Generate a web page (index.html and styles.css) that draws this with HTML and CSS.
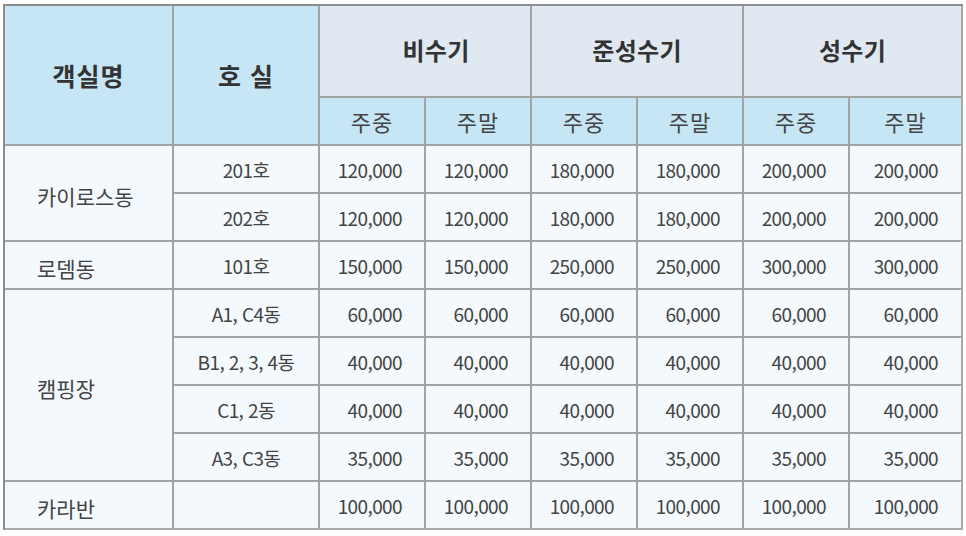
FILE: index.html
```html
<!DOCTYPE html>
<html lang="ko">
<head>
<meta charset="utf-8">
<title>객실 요금표</title>
<link rel="stylesheet" href="styles.css">
</head>
<body>
<table class="rates">
  <colgroup>
    <col class="c-name">
    <col class="c-room">
    <col class="c-val"><col class="c-val"><col class="c-val"><col class="c-val"><col class="c-val">
    <col class="c-last">
  </colgroup>
  <thead>
    <tr class="h1">
      <th rowspan="2" class="hb">객실명</th>
      <th rowspan="2" class="hb">호 실</th>
      <th colspan="2" class="hg hg-off">비수기</th>
      <th colspan="2" class="hg">준성수기</th>
      <th colspan="2" class="hg">성수기</th>
    </tr>
    <tr class="h2">
      <th class="hs">주중</th><th class="hs">주말</th>
      <th class="hs">주중</th><th class="hs">주말</th>
      <th class="hs">주중</th><th class="hs">주말</th>
    </tr>
  </thead>
  <tbody>
    <tr>
      <td rowspan="2" class="name">카이로스동</td>
      <td class="room">201호</td>
      <td class="num">120,000</td><td class="num">120,000</td>
      <td class="num">180,000</td><td class="num">180,000</td>
      <td class="num">200,000</td><td class="num">200,000</td>
    </tr>
    <tr>
      <td class="room">202호</td>
      <td class="num">120,000</td><td class="num">120,000</td>
      <td class="num">180,000</td><td class="num">180,000</td>
      <td class="num">200,000</td><td class="num">200,000</td>
    </tr>
    <tr>
      <td class="name">로뎀동</td>
      <td class="room">101호</td>
      <td class="num">150,000</td><td class="num">150,000</td>
      <td class="num">250,000</td><td class="num">250,000</td>
      <td class="num">300,000</td><td class="num">300,000</td>
    </tr>
    <tr>
      <td rowspan="4" class="name">캠핑장</td>
      <td class="room">A1, C4동</td>
      <td class="num">60,000</td><td class="num">60,000</td>
      <td class="num">60,000</td><td class="num">60,000</td>
      <td class="num">60,000</td><td class="num">60,000</td>
    </tr>
    <tr>
      <td class="room">B1, 2, 3, 4동</td>
      <td class="num">40,000</td><td class="num">40,000</td>
      <td class="num">40,000</td><td class="num">40,000</td>
      <td class="num">40,000</td><td class="num">40,000</td>
    </tr>
    <tr>
      <td class="room">C1, 2동</td>
      <td class="num">40,000</td><td class="num">40,000</td>
      <td class="num">40,000</td><td class="num">40,000</td>
      <td class="num">40,000</td><td class="num">40,000</td>
    </tr>
    <tr>
      <td class="room">A3, C3동</td>
      <td class="num">35,000</td><td class="num">35,000</td>
      <td class="num">35,000</td><td class="num">35,000</td>
      <td class="num">35,000</td><td class="num">35,000</td>
    </tr>
    <tr>
      <td class="name">카라반</td>
      <td class="room"></td>
      <td class="num">100,000</td><td class="num">100,000</td>
      <td class="num">100,000</td><td class="num">100,000</td>
      <td class="num">100,000</td><td class="num">100,000</td>
    </tr>
  </tbody>
</table>
</body>
</html>
```
FILE: styles.css
```css
html, body {
  margin: 0;
  padding: 0;
  background: #ffffff;
}

body {
  padding: 4px 0 0 3px;
  font-family: "Noto Sans CJK KR", "Noto Sans", sans-serif;
  color: #444444;
}

.rates {
  border-collapse: separate;
  border-spacing: 0;
  table-layout: fixed;
  width: 960px;
  border-left: 2px solid #8d8d8d;
  border-top: 2px solid #8d8d8d;
}

.c-name { width: 169px; }
.c-room { width: 146px; }
.c-val { width: 106px; }
.c-last { width: 113px; }

.rates th,
.rates td {
  box-sizing: border-box;
  padding: 0;
  border-right: 2px solid #a3a3a3;
  border-bottom: 2px solid #a3a3a3;
  line-height: 1;
}

.rates th:last-child,
.rates td:last-child {
  border-right-color: #a9a9a9;
}

.h1 { height: 92px; }
.h2 { height: 48px; }
.rates tbody tr { height: 48px; }

.hb {
  background: #c6e6f5;
  color: #333333;
  font-size: 25px;
  font-weight: 700;
  letter-spacing: 1px;
  text-align: center;
}

.hg {
  background: #e0e9f1;
  color: #333333;
  font-size: 24px;
  font-weight: 700;
  letter-spacing: 0.3px;
  text-align: center;
  padding-bottom: 3px !important;
}

.hg-off {
  padding-left: 22px !important;
}

.hs {
  background: #c6e6f5;
  color: #444444;
  font-size: 22px;
  font-weight: 400;
  letter-spacing: 1px;
  text-align: center;
}

.rates td {
  background: #f3f9fd;
  font-size: 19px;
  letter-spacing: -0.6px;
}

.name {
  text-align: left;
  padding-left: 32px !important;
  padding-top: 6px !important;
  font-size: 21px !important;
  letter-spacing: 0 !important;
}

.room {
  text-align: center;
}

.num {
  text-align: right;
  padding-right: 22px !important;
}

.rates td.num:last-child {
  padding-right: 23px !important;
}

.rates tbody tr:last-child td {
  border-bottom-color: #a9a9a9;
}
```
